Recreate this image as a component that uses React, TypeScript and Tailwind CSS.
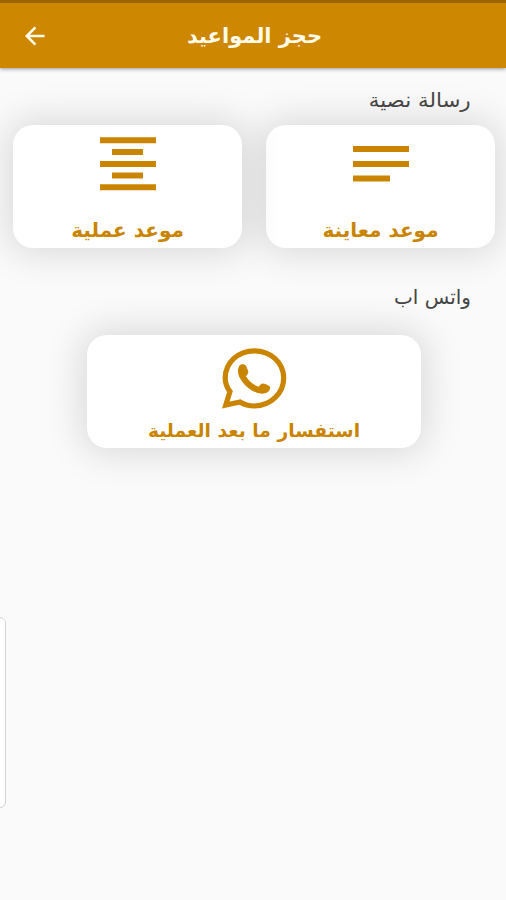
import type { ReactNode } from 'react';

function BackArrow() {
  return (
    <svg width="20" height="20" viewBox="0 0 20 20" fill="none" stroke="#fffbe8" strokeWidth="2.6">
      <path d="M19.5 10H2M10.4 1.4L1.8 10l8.6 8.6" />
    </svg>
  );
}

function NotesIcon() {
  return (
    <svg width="56" height="54" viewBox="0 0 56 54" fill="#c98500">
      <path d="M0 9h56v6H0zM0 24h56v6H0zM0 38.5h37v6H0z" />
    </svg>
  );
}

function AlignCenterIcon() {
  return (
    <svg width="56" height="54" viewBox="0 0 56 54" fill="#c98500">
      <path d="M0 .3h56v6H0zM12 12h31v6H12zM0 24h56v6H0zM12 35.5h31v6H12zM0 47.3h56v6H0z" />
    </svg>
  );
}

function WhatsappIcon() {
  return (
    <svg width="66" height="62" viewBox="0 0 66 62" fill="none">
      <path
        d="M4.800 58L9 44.600C5.900 40.500 4.200 36 4.200 31 4.200 15.700 17 3.800 33.300 3.800S62.700 15.700 62.700 31 49.600 59 33.300 59c-5.300 0-10.100-1.400-14.300-4z"
        stroke="#c98500"
        strokeWidth="5.2"
        strokeLinejoin="miter"
      />
      <path
        d="M18.600 18.600C20.200 16.800 23.800 16.600 25.200 19.200L27.200 24C27.700 26 26.300 27.600 25 29.300 28 34.200 32 37.600 37.400 39.800 38.800 38.600 40 36.600 41.800 36.600 44 36.800 47 38.300 48.800 39.600 49.600 41.700 48.400 44 46.400 45.200 43.400 47 39.600 47 35.800 45.800 28 43 22 37 18.600 30.600 16.600 26.200 16.400 21.600 18.600 18.600z"
        fill="#c98500"
      />
    </svg>
  );
}

type CardProps = {
  icon: ReactNode;
  label: string;
  className: string;
  labelClassName: string;
};

function Card({ icon, label, className, labelClassName }: CardProps) {
  return (
    <button
      className={`flex flex-col items-center rounded-[20px] bg-white shadow-[0_0_36px_6px_rgba(0,0,0,0.13)] ${className}`}
    >
      {icon}
      <span className={`whitespace-nowrap font-bold text-[#c98500] ${labelClassName}`}>{label}</span>
    </button>
  );
}

export default function App() {
  return (
    <div
      dir="rtl"
      className="relative h-[900px] w-[506px] overflow-hidden bg-[#fafafa] font-['DejaVu_Sans',sans-serif]"
    >
      {/* App bar */}
      <header className="relative z-10 grid h-[68px] grid-cols-[1fr_auto_1fr] items-center border-t-[3px] border-[#9c6500] bg-[#ce8700] shadow-[0_1px_4px_rgba(0,0,0,0.4)]">
        <span />
        <h1 className="whitespace-nowrap pl-[3px] text-[21px] leading-[32px] font-bold text-[#fffbe8]">
          حجز المواعيد
        </h1>
        <button className="justify-self-end pl-[25px]">
          <BackArrow />
        </button>
      </header>

      <main>
        <h2 className="relative z-10 h-[57px] origin-right scale-x-107 pt-[18px] pr-[33px] text-[20px] leading-[28px] text-[#444]">
          رسالة نصية
        </h2>
        <div className="flex gap-6 pr-[11px]">
          <Card
            icon={<NotesIcon />}
            label="موعد معاينة"
            className="h-[123px] w-[229px] pt-3"
            labelClassName="mt-[25px] text-[20px] leading-[28px]"
          />
          <Card
            icon={<AlignCenterIcon />}
            label="موعد عملية"
            className="h-[123px] w-[229px] pt-3"
            labelClassName="mt-[25px] text-[20px] leading-[28px]"
          />
        </div>

        <h2 className="relative z-10 h-[87px] pt-[35px] pr-[35px] text-[20px] leading-[28px] text-[#444]">
          واتس اب
        </h2>
        <div className="flex justify-center pl-[2px]">
          <Card
            icon={<WhatsappIcon />}
            label="استفسار ما بعد العملية"
            className="h-[113px] w-[334px] pt-3"
            labelClassName="mt-[8px] text-[18.7px] leading-[28px]"
          />
        </div>
      </main>

      {/* Edge panel handle */}
      <div className="absolute top-[617px] -left-[10px] h-[191px] w-4 rounded-[6px] border border-[#d4d4d4] bg-white" />
    </div>
  );
}
